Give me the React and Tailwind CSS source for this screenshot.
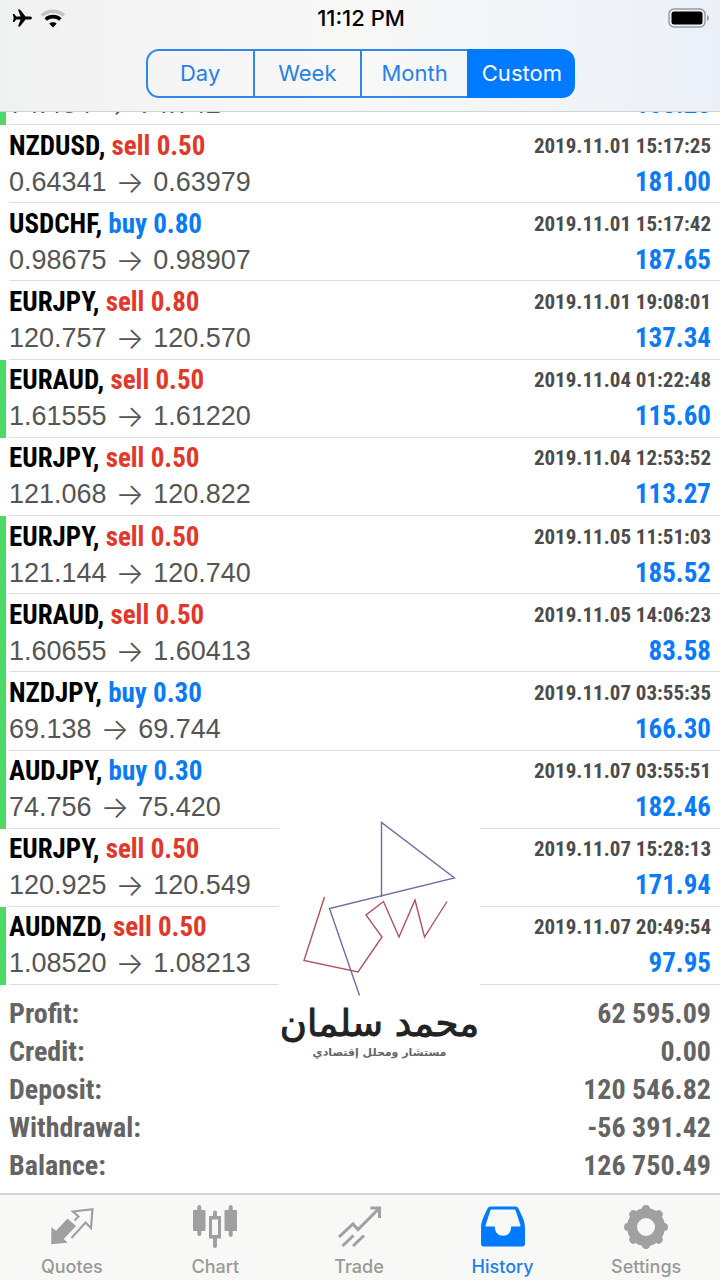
const deals = [
  { symbol: "NZDUSD", side: "sell", volume: "0.50", open: "0.64341", close: "0.63979", time: "2019.11.01 15:17:25", profit: "181.00" },
  { symbol: "USDCHF", side: "buy", volume: "0.80", open: "0.98675", close: "0.98907", time: "2019.11.01 15:17:42", profit: "187.65" },
  { symbol: "EURJPY", side: "sell", volume: "0.80", open: "120.757", close: "120.570", time: "2019.11.01 19:08:01", profit: "137.34" },
  { symbol: "EURAUD", side: "sell", volume: "0.50", open: "1.61555", close: "1.61220", time: "2019.11.04 01:22:48", profit: "115.60", marked: true },
  { symbol: "EURJPY", side: "sell", volume: "0.50", open: "121.068", close: "120.822", time: "2019.11.04 12:53:52", profit: "113.27" },
  { symbol: "EURJPY", side: "sell", volume: "0.50", open: "121.144", close: "120.740", time: "2019.11.05 11:51:03", profit: "185.52", marked: true },
  { symbol: "EURAUD", side: "sell", volume: "0.50", open: "1.60655", close: "1.60413", time: "2019.11.05 14:06:23", profit: "83.58", marked: true },
  { symbol: "NZDJPY", side: "buy", volume: "0.30", open: "69.138", close: "69.744", time: "2019.11.07 03:55:35", profit: "166.30", marked: true },
  { symbol: "AUDJPY", side: "buy", volume: "0.30", open: "74.756", close: "75.420", time: "2019.11.07 03:55:51", profit: "182.46", marked: true },
  { symbol: "EURJPY", side: "sell", volume: "0.50", open: "120.925", close: "120.549", time: "2019.11.07 15:28:13", profit: "171.94" },
  { symbol: "AUDNZD", side: "sell", volume: "0.50", open: "1.08520", close: "1.08213", time: "2019.11.07 20:49:54", profit: "97.95", marked: true },
];

const totals = [
  ["Profit:", "62 595.09"],
  ["Credit:", "0.00"],
  ["Deposit:", "120 546.82"],
  ["Withdrawal:", "-56 391.42"],
  ["Balance:", "126 750.49"],
];

const periods = ["Day", "Week", "Month", "Custom"];

function StatusBar() {
  return (
    <div className="grid h-9 grid-cols-3 items-center pr-2.5 pl-3">
      <div className="flex items-center gap-2">
        <svg viewBox="0 0 20 18" className="h-[18px] w-5" aria-label="Airplane mode">
          <path
            d="M20 9c0-.9-1-1.5-2.3-1.5h-4.2L8 .6H6l2.6 6.9H4.2L2.3 5H.8l.9 4-.9 4h1.5l1.9-2.5h4.4L6 17.4h2l5.5-6.9h4.2C19 10.5 20 9.9 20 9z"
            fill="#000"
          />
        </svg>
        <svg viewBox="0 0 26 19" className="h-[19px] w-[26px]" fill="none" aria-label="Wi-Fi">
          <path d="M1.8 6.5C8 .8 18 .8 24.2 6.5" stroke="#c4c4c4" strokeWidth="3.6" />
          <path d="M5.7 10.5c4.2-3.8 10.4-3.8 14.6 0" stroke="#000" strokeWidth="3.6" />
          <path d="M13 18.6l-3.7-3.9c2.1-1.9 5.3-1.9 7.4 0z" fill="#000" />
        </svg>
      </div>
      <time className="text-center text-[22px] leading-6 font-medium text-black">11:12 PM</time>
      <svg viewBox="0 0 42 20" className="h-5 w-[42px] justify-self-end" aria-label="Battery">
        <rect x="1" y="1" width="36" height="18" rx="5" fill="none" stroke="#9a9a9a" strokeWidth="1.5" />
        <rect x="3.5" y="3.5" width="31" height="13" rx="2.5" fill="#000" />
        <path d="M39 7c2.6 1 2.6 5 0 6z" fill="#9a9a9a" />
      </svg>
    </div>
  );
}

function PriceLine({ deal }) {
  return (
    <div className="flex items-center justify-between leading-9">
      <span className="flex gap-[9px] font-['Liberation_Sans'] text-[27px] text-[#555]">
        <span>{deal.open}</span>
        <span className="font-['Inter'] text-[30px] font-light">→</span>
        <span>{deal.close}</span>
      </span>
      <span className="font-['Roboto_Condensed','Roboto',sans-serif] text-[27px] font-bold text-[#0a7af5]">
        {deal.profit}
      </span>
    </div>
  );
}

function DealRow({ deal }) {
  return (
    <li
      className={`flex min-h-[78px] flex-1 border-l-6 pl-[3px] ${
        deal.marked ? "border-[#4cd964]" : "border-transparent"
      }`}
    >
      <div className="flex flex-1 flex-col justify-center border-b border-[#dedede] pr-[9px]">
        <div className="flex items-center justify-between font-['Roboto_Condensed','Roboto',sans-serif] leading-9 font-bold">
          <span className="text-[27px] text-black">
            {deal.symbol},{" "}
            <span className={deal.side === "sell" ? "text-[#e0382b]" : "text-[#0a7af5]"}>
              {deal.side} {deal.volume}
            </span>
          </span>
          <time className="text-[21px] text-[#4c4c4c]">{deal.time}</time>
        </div>
        <PriceLine deal={deal} />
      </div>
    </li>
  );
}

function Watermark() {
  return (
    <div className="absolute bottom-[132px] left-1/2 -ml-[81px] flex w-[201px] flex-col items-center bg-white" dir="rtl">
      <svg viewBox="0 0 201 184" className="h-[184px] w-[201px]" fill="none" strokeWidth="1.4">
        <path d="M102.5 84V9.5l73 55.5L50.5 95.5l30 87" stroke="#6d709c" />
        <path d="M45.5 84L25 147.5l54 11.5 24-35-16-22 17.5-13.5L120 124l16-37 9.5 37 22.5-35.5" stroke="#ad5365" />
      </svg>
      <span className="font-['DejaVu_Sans'] text-[37px] leading-[54px] whitespace-nowrap text-[#222] [-webkit-text-stroke:1px_#222]">
        محمد سلمان
      </span>
      <span className="-mt-1.5 font-['DejaVu_Sans'] text-[11px] leading-4 font-bold whitespace-nowrap text-[#666]">
        مستشار ومحلل إقتصادي
      </span>
    </div>
  );
}

function QuotesIcon() {
  return (
    <svg viewBox="0 0 44 44" className="size-11">
      <path d="M1.3 22.2l4.8 3.5L17.5 13.5l8.5 7.5L13.8 34l3.7 3.8-16.2 1.4z" fill="#a0a0a0" />
      <path d="M24.5 15.5l4-4-5.5-5L42.5 4.2 41 23l-5.5-5.5L21.5 33" fill="none" stroke="#a0a0a0" strokeWidth="2.2" />
    </svg>
  );
}

function ChartIcon() {
  return (
    <svg viewBox="0 0 44 44" className="size-11" fill="#a0a0a0">
      <rect x="0" y="5" width="12.5" height="21" rx="1" />
      <rect x="4.3" y="0" width="4" height="31" rx="2" />
      <rect x="31.5" y="5" width="12.5" height="21" rx="1" />
      <rect x="35.7" y="0" width="4" height="32" rx="2" />
      <path d="M20 7.5a2 2 0 0 1 4 0V11h4v22.5h-4V41a2 2 0 0 1-4 0v-7.5h-4V11h4zM19 14.5V30h6V14.5z" fillRule="evenodd" />
    </svg>
  );
}

function TradeIcon() {
  return (
    <svg viewBox="0 0 44 44" className="size-11" fill="none" stroke="#a0a0a0" strokeWidth="3">
      <path d="M2 32l14-13 5 5.5L42 3.5" />
      <path d="M33.5 3h9v10" />
      <path d="M5.5 41l11-10.5M16 41l11-10.5" />
    </svg>
  );
}

function HistoryIcon() {
  return (
    <svg viewBox="0 0 44 44" className="size-11">
      <path
        d="M9.5 1.5h25c1.5 0 2.6.9 3.2 2.4C41 11 44 15.5 44 23v16c0 1.6-1 2.5-2.6 2.5H2.6C1 41.5 0 40.6 0 39V23C0 15.5 3 11 6.3 3.9c.6-1.5 1.7-2.4 3.2-2.4zM11 4.5c-1 0-1.5.5-1.8 1.4L4.5 20.5c0 .8.3 1 1 1h7.3c.8 0 1.2.4 1.2 1.3 0 4.8 3.4 8 8 8s8-3.2 8-8c0-.9.4-1.3 1.2-1.3h7.3c.7 0 1-.2 1-1L34.8 5.9c-.3-.9-.8-1.4-1.8-1.4z"
        fill="#007aff"
        fillRule="evenodd"
      />
    </svg>
  );
}

function SettingsIcon() {
  return (
    <svg viewBox="0 0 44 44" className="size-11" fill="none" stroke="#a0a0a0">
      <circle cx="22" cy="22" r="14" strokeWidth="10" />
      <path
        d="M22 4v2M22 38v2M4 22h2M38 22h2M9.3 9.3l1.4 1.4M33.3 33.3l1.4 1.4M9.3 34.7l1.4-1.4M33.3 10.7l1.4-1.4"
        strokeWidth="8"
        strokeLinecap="round"
      />
    </svg>
  );
}

const tabs = [
  { label: "Quotes", icon: QuotesIcon },
  { label: "Chart", icon: ChartIcon },
  { label: "Trade", icon: TradeIcon },
  { label: "History", icon: HistoryIcon, active: true },
  { label: "Settings", icon: SettingsIcon },
];

export default function App() {
  return (
    <div className="flex min-h-screen flex-col bg-white font-['Inter',sans-serif]">
      <header className="h-28 border-b border-[#d2d2d4] bg-linear-to-r from-[#f0f2f1] via-[#f8f8f7] to-[#ebf0f8]">
        <StatusBar />
        <div className="mx-auto mt-[13px] grid h-[49px] w-[429px] grid-cols-4">
          {periods.map((period) => (
            <button
              key={period}
              type="button"
              className={`border-y-2 border-l-2 text-[22px] first:rounded-l-[13px] last:rounded-r-[13px] ${
                period === "Custom" ? "border-[#007aff] bg-[#007aff] text-white" : "border-[#2f87e6] text-[#2a80e0]"
              }`}
            >
              {period}
            </button>
          ))}
        </div>
      </header>

      <main className="relative flex flex-1 flex-col">
        {/* tail of the row scrolled under the header */}
        <div className="flex h-[13px] flex-col justify-end overflow-hidden border-l-6 border-[#4cd964] pl-[3px]">
          <div className="border-b border-[#dedede] pr-[9px] pb-0.5">
            <PriceLine deal={{ open: "74.484", close: "74.742", profit: "168.28" }} />
          </div>
        </div>
        <ul className="flex flex-1 flex-col">
          {deals.map((deal) => (
            <DealRow key={deal.time} deal={deal} />
          ))}
        </ul>

        <dl className="px-[9px] pt-2.5 pb-2 font-['Roboto_Condensed','Roboto',sans-serif] text-[28px] leading-[38px] font-bold text-[#646464]">
          {totals.map(([label, value]) => (
            <div key={label} className="flex justify-between">
              <dt>{label}</dt>
              <dd>{value}</dd>
            </div>
          ))}
        </dl>

        <Watermark />
      </main>

      <nav className="grid h-[87px] grid-cols-5 border-t-2 border-[#d4d4d4] bg-[#f8f8f7] pt-2.5 pr-0.5">
        {tabs.map(({ label, icon: Icon, active }) => (
          <a
            key={label}
            href={`#${label.toLowerCase()}`}
            className={`flex flex-col items-center gap-1.5 text-[18px] leading-6 font-medium ${
              active ? "text-[#1d7fec]" : "text-[#999]"
            }`}
          >
            <Icon />
            {label}
          </a>
        ))}
      </nav>
    </div>
  );
}
